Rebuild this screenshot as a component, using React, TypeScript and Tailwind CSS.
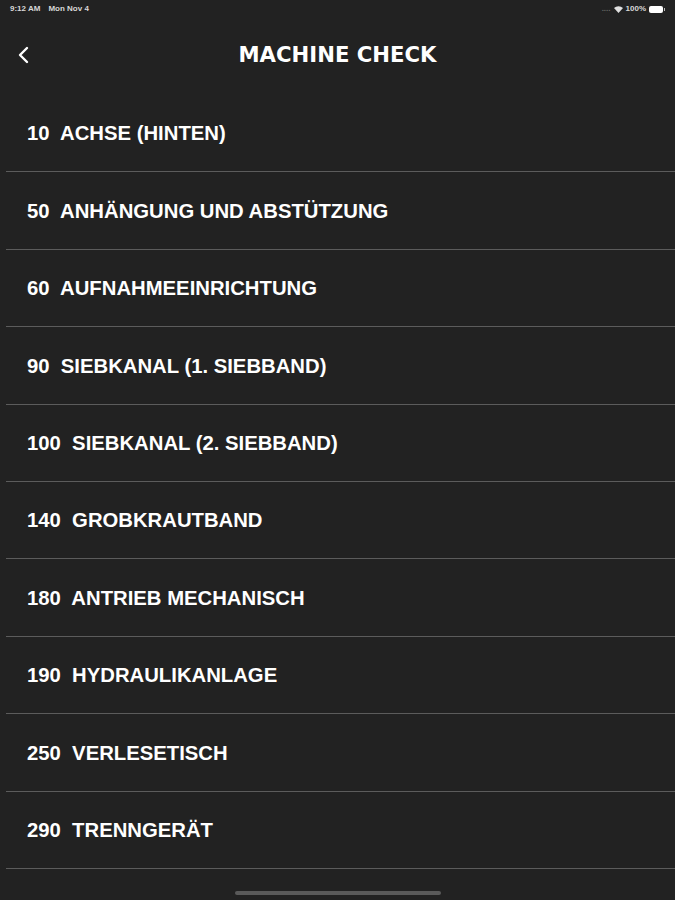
import React from "react";

const items = [
  "10  ACHSE (HINTEN)",
  "50  ANHÄNGUNG UND ABSTÜTZUNG",
  "60  AUFNAHMEEINRICHTUNG",
  "90  SIEBKANAL (1. SIEBBAND)",
  "100  SIEBKANAL (2. SIEBBAND)",
  "140  GROBKRAUTBAND",
  "180  ANTRIEB MECHANISCH",
  "190  HYDRAULIKANLAGE",
  "250  VERLESETISCH",
  "290  TRENNGERÄT",
  "300  ROLLBODENBUNKER",
];

export default function App() {
  return (
    <div className="relative h-[900px] w-[675px] overflow-hidden bg-[#222222] text-white" style={{ fontFamily: '"Liberation Sans", Arial, sans-serif' }}>
      {/* status bar */}
      <div className="flex h-[18px] items-center justify-between px-[10px] text-[8px] font-bold text-[#d8d8d8]">
        <div className="flex gap-[8px]">
          <span>9:12 AM</span>
          <span>Mon Nov 4</span>
        </div>
        <div className="flex items-center gap-[3px]">
          <span className="text-[#666]">....</span>
          <svg width="9" height="7" viewBox="0 0 9 7" fill="#e0e0e0">
            <path d="M4.5 7 L0 2 A6.5 6.5 0 0 1 9 2 Z" />
          </svg>
          <span>100%</span>
          <div className="flex items-center">
            <div className="h-[7px] w-[14px] rounded-[2px] bg-white" />
            <div className="ml-[1px] h-[3px] w-[1px] bg-[#bbb]" />
          </div>
        </div>
      </div>
      {/* nav bar */}
      <div className="relative flex h-[77px] items-center justify-center pb-[3px]">
        <button className="absolute left-[16px] top-[25px] flex h-[24px] w-[16px] items-center">
          <svg width="14" height="20" viewBox="0 0 14 20" fill="none" stroke="white" strokeWidth="2.4" strokeLinecap="round" strokeLinejoin="round">
            <path d="M11 3 L4 10 L11 17" />
          </svg>
        </button>
        <h1 className="text-[21.2px] font-bold text-white" style={{ fontFamily: '"DejaVu Sans", sans-serif' }}>MACHINE CHECK</h1>
      </div>
      {/* list */}
      <div className="pl-[6px]">
        {items.map((t) => (
          <div key={t} className="flex h-[77.4px] items-center border-b-[1.5px] border-[#5c5c5c] pl-[21px] pt-[1px]">
            <span className="whitespace-pre text-[20.3px] font-bold text-white">{t}</span>
          </div>
        ))}
      </div>
      {/* home indicator */}
      <div className="absolute bottom-[5px] left-[235px] h-[4px] w-[206px] rounded-full bg-[#5a5a5a]" />
    </div>
  );
}
